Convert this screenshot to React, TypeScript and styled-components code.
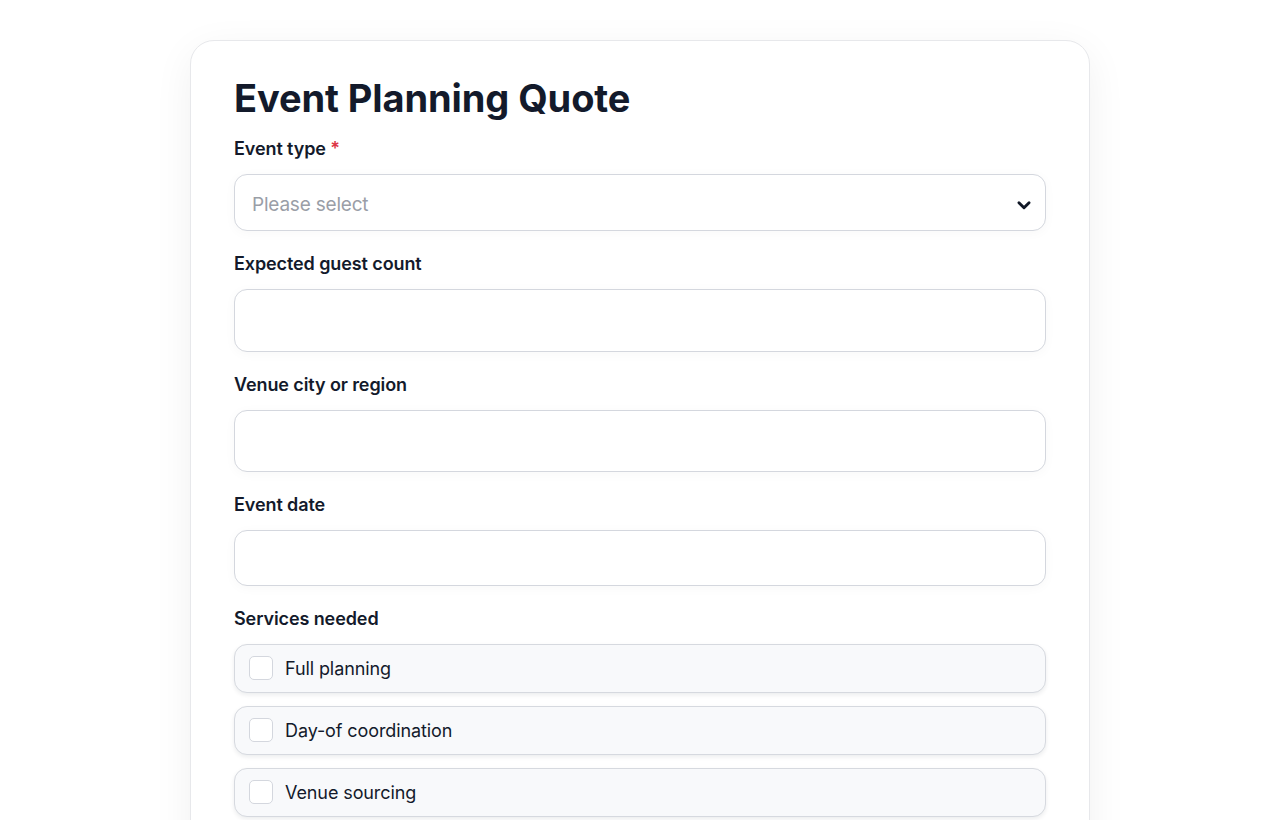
import React from 'react';
import styled, { createGlobalStyle } from 'styled-components';

const GlobalStyle = createGlobalStyle`
  * { box-sizing: border-box; }
  body {
    margin: 0;
    background: #ffffff;
    font-family: Inter, "Noto Sans", sans-serif;
    color: #111827;
  }
`;

const services = ['Full planning', 'Day-of coordination', 'Venue sourcing'];

function App() {
  return (
    <Page>
      <GlobalStyle />
      <Card>
        <Title>Event Planning Quote</Title>

        <Field>
          <Label>
            Event type <Required>*</Required>
          </Label>
          <SelectBox>
            <Placeholder>Please select</Placeholder>
            <svg width="18" height="18" viewBox="0 0 16 16" fill="none">
              <polyline
                points="3.5,6 8,10.5 12.5,6"
                stroke="#111827"
                strokeWidth="2.6"
                strokeLinecap="round"
                strokeLinejoin="round"
              />
            </svg>
          </SelectBox>
        </Field>

        <Field>
          <Label>Expected guest count</Label>
          <TextInput $height={63} />
        </Field>

        <Field>
          <Label>Venue city or region</Label>
          <TextInput $height={62} />
        </Field>

        <Field>
          <Label>Event date</Label>
          <TextInput $height={56} />
        </Field>

        <Field>
          <Label>Services needed</Label>
          <Options>
            {services.map((s) => (
              <OptionRow key={s}>
                <CheckBox />
                <OptionText>{s}</OptionText>
              </OptionRow>
            ))}
          </Options>
        </Field>
      </Card>
    </Page>
  );
}

const Page = styled.div`
  display: flex;
  justify-content: center;
  padding-top: 40px;
  min-height: 820px;
`;

const Card = styled.div`
  width: 900px;
  background: #fff;
  border: 1px solid #e7e8eb;
  border-radius: 24px;
  box-shadow: 0 10px 40px rgba(17, 24, 39, 0.06);
  padding: 34px 43px 60px;
  display: flex;
  flex-direction: column;
  gap: 20px;
`;

const Title = styled.h1`
  margin: 0 0 -7px;
  font-size: 38px;
  line-height: 1.25;
  font-weight: 700;
  letter-spacing: -0.1px;
  color: #131a2b;
`;

const Field = styled.div`
  display: flex;
  flex-direction: column;
  gap: 13px;
`;

const Label = styled.label`
  font-size: 18px;
  line-height: 25px;
  font-weight: 600;
  color: #131a2b;
  letter-spacing: -0.1px;
`;

const Required = styled.span`
  color: #dc3545;
`;

const SelectBox = styled.div`
  height: 57px;
  border: 1px solid #d4d7de;
  border-radius: 13px;
  background: #fff;
  box-shadow: 0 2px 12px rgba(17, 24, 39, 0.03);
  display: flex;
  align-items: center;
  justify-content: space-between;
  padding: 5px 12px 0 17px;
`;

const Placeholder = styled.span`
  font-size: 19px;
  color: #9a9ea7;
  font-weight: 400;
  letter-spacing: -0.2px;
`;

const TextInput = styled.div<{ $height: number }>`
  height: ${(p) => p.$height}px;
  border: 1px solid #d4d7de;
  border-radius: 13px;
  background: #fff;
  box-shadow: 0 2px 12px rgba(17, 24, 39, 0.03);
`;

const Options = styled.div`
  display: flex;
  flex-direction: column;
  gap: 13px;
`;

const OptionRow = styled.div`
  height: 49px;
  display: flex;
  align-items: center;
  gap: 12px;
  padding: 0 14px;
  background: #f8f9fb;
  border: 1px solid #d6d9df;
  border-radius: 13px;
  box-shadow: 0 2px 4px rgba(17, 24, 39, 0.08);
`;

const CheckBox = styled.span`
  width: 24px;
  height: 24px;
  border: 1px solid #d4d7de;
  border-radius: 5px;
  background: #fff;
  flex-shrink: 0;
`;

const OptionText = styled.span`
  font-size: 18px;
  color: #131a2b;
  font-weight: 400;
  letter-spacing: -0.1px;
`;

export default App;
